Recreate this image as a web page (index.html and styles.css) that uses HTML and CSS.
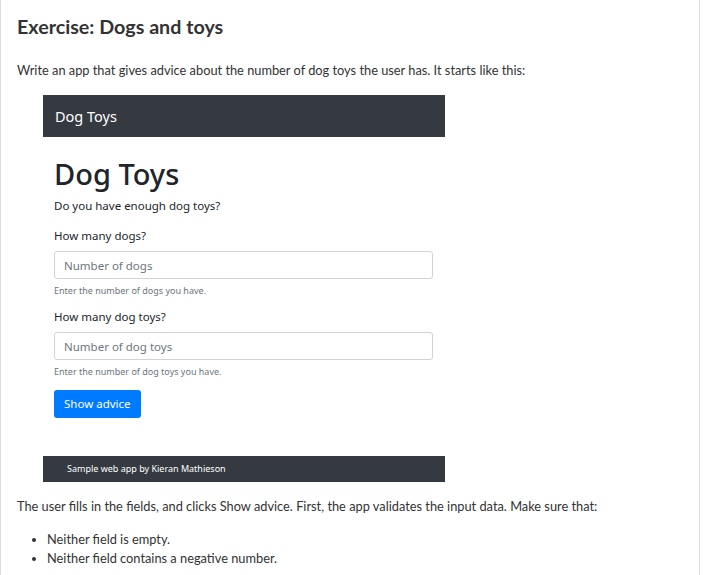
FILE: index.html
```html
<!DOCTYPE html>
<html lang="en">
<head>
    <meta charset="UTF-8">
    <meta name="viewport" content="width=device-width, initial-scale=1.0">
    <title>Exercise: Dogs and toys</title>
    <link rel="stylesheet" href="styles.css">
</head>
<body>
    <div class="lesson">
        <h2>Exercise: Dogs and toys</h2>
        <p class="intro">Write an app that gives advice about the number of dog toys the user has. It starts like this:</p>

        <div class="app-shot">
            <div class="app-nav">Dog Toys</div>
            <div class="app-main">
                <h1>Dog Toys</h1>
                <p class="lead">Do you have enough dog toys?</p>
                <div class="field">
                    <label for="dogs">How many dogs?</label>
                    <input type="text" id="dogs" placeholder="Number of dogs">
                    <small>Enter the number of dogs you have.</small>
                </div>
                <div class="field">
                    <label for="toys">How many dog toys?</label>
                    <input type="text" id="toys" placeholder="Number of dog toys">
                    <small>Enter the number of dog toys you have.</small>
                </div>
                <button class="btn">Show advice</button>
            </div>
            <div class="app-footer">Sample web app by Kieran Mathieson</div>
        </div>

        <p>The user fills in the fields, and clicks Show advice. First, the app validates the input data. Make sure that:</p>
        <ul>
            <li>Neither field is empty.</li>
            <li>Neither field contains a negative number.</li>
        </ul>
    </div>
</body>
</html>
```

FILE: styles.css
```css
body {
    margin: 0;
    font-family: 'Lato', sans-serif;
    color: #333;
    background: #fff;
}
.lesson {
    width: 700px;
    min-height: 575px;
    padding: 1px 16px 0 16px;
    border-left: 1px solid #ddd;
    border-right: 1px solid #ddd;
    box-sizing: border-box;
    font-size: 12.8px;
}
.lesson h2 {
    font-size: 19.7px;
    font-weight: bold;
    margin: 14px 0 22px 0;
}
.lesson p {
    margin: 0 0 14px 0;
    line-height: 20px;
}
.lesson .intro {
    margin-bottom: 15px;
}
.lesson ul {
    margin: 4px 0 0 0;
    padding-left: 30px;
    line-height: 19px;
}
.app-shot {
    width: 402px;
    margin: 0 0 14px 26px;
    font-family: 'Noto Sans', sans-serif;
    color: #212529;
}
.app-nav {
    background: #343a40;
    color: #fff;
    height: 42px;
    line-height: 42px;
    padding-left: 12px;
    font-size: 14.5px;
}
.app-main {
    padding: 19px 12px 38px 11px;
}
.app-main h1 {
    font-size: 29px;
    font-weight: 500;
    margin: 0 0 5px 0;
    line-height: 36px;
}
.app-main .lead {
    font-size: 11.5px;
    margin: 0 0 12px 0;
    line-height: 18px;
}
.field {
    display: flex;
    flex-direction: column;
    margin-bottom: 11px;
}
.field + .field {
    margin-bottom: 12px;
}
.field label {
    font-size: 11.5px;
    line-height: 18px;
    margin-bottom: 6px;
}
.field input {
    height: 28px;
    box-sizing: border-box;
    border: 1px solid #ced4da;
    border-radius: 3px;
    padding: 0 9px;
    font-family: 'Noto Sans', sans-serif;
    font-size: 11.5px;
    outline: none;
}
.field input::placeholder {
    color: #6c757d;
}
.field small {
    font-size: 9px;
    color: #6c757d;
    margin-top: 5px;
}
.btn {
    background: #007bff;
    color: #fff;
    border: none;
    border-radius: 3px;
    height: 28px;
    line-height: 28px;
    padding: 0 10px;
    font-family: 'Noto Sans', sans-serif;
    font-size: 11.5px;
}
.app-footer {
    background: #343a40;
    color: #fff;
    height: 26px;
    line-height: 26px;
    padding-left: 24px;
    font-size: 9px;
}
```
